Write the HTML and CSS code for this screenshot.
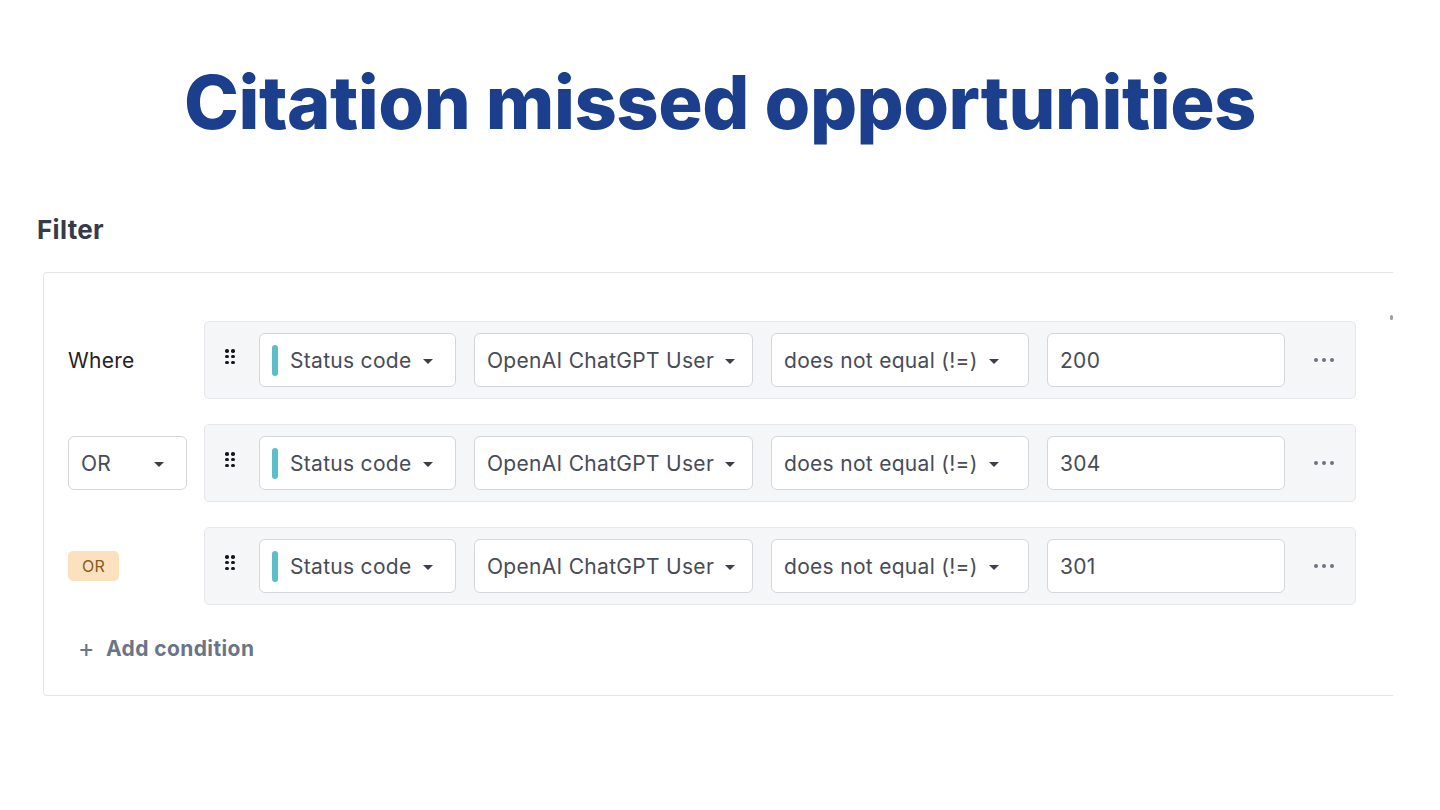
FILE: index.html
```html
<!DOCTYPE html>
<html lang="en">
<head>
<meta charset="utf-8">
<title>Citation missed opportunities</title>
<link rel="stylesheet" href="styles.css">
</head>
<body>
<h1 class="title">Citation missed opportunities</h1>
<section class="filter">
  <h2 class="filter-title">Filter</h2>
  <div class="card">
    <span class="edge-mark"></span>
    <div class="row">
      <div class="lead"><span class="where">Where</span></div>
      <div class="group">
        <span class="handle"><i></i><i></i><i></i><i></i><i></i><i></i></span>
        <div class="select sel-field"><span class="bar"></span><span>Status code</span><span class="caret"></span></div>
        <div class="select sel-agent"><span>OpenAI ChatGPT User</span><span class="caret"></span></div>
        <div class="select sel-op"><span>does not equal (!=)</span><span class="caret"></span></div>
        <div class="input">200</div>
        <span class="more"><i></i><i></i><i></i></span>
      </div>
    </div>
    <div class="row">
      <div class="lead"><div class="select sel-or"><span>OR</span><span class="caret"></span></div></div>
      <div class="group">
        <span class="handle"><i></i><i></i><i></i><i></i><i></i><i></i></span>
        <div class="select sel-field"><span class="bar"></span><span>Status code</span><span class="caret"></span></div>
        <div class="select sel-agent"><span>OpenAI ChatGPT User</span><span class="caret"></span></div>
        <div class="select sel-op"><span>does not equal (!=)</span><span class="caret"></span></div>
        <div class="input">304</div>
        <span class="more"><i></i><i></i><i></i></span>
      </div>
    </div>
    <div class="row">
      <div class="lead"><span class="badge">OR</span></div>
      <div class="group">
        <span class="handle"><i></i><i></i><i></i><i></i><i></i><i></i></span>
        <div class="select sel-field"><span class="bar"></span><span>Status code</span><span class="caret"></span></div>
        <div class="select sel-agent"><span>OpenAI ChatGPT User</span><span class="caret"></span></div>
        <div class="select sel-op"><span>does not equal (!=)</span><span class="caret"></span></div>
        <div class="input">301</div>
        <span class="more"><i></i><i></i><i></i></span>
      </div>
    </div>
    <div class="add"><span class="plus">+</span><span>Add condition</span></div>
  </div>
</section>
</body>
</html>
```
FILE: styles.css
```css
* { box-sizing: border-box; }
html, body { margin: 0; padding: 0; background: #fff; }
body {
  font-family: "Inter", "Noto Sans", sans-serif;
  width: 1440px;
  height: 810px;
  overflow: hidden;
}
.title {
  margin: 0;
  padding-top: 62px;
  height: 150px;
  text-align: center;
  font-size: 74px;
  font-weight: 800;
  color: #1b3f8c;
  letter-spacing: -0.5px;
  line-height: 80px;
}
.filter { padding-left: 37px; padding-top: 65px; }
.filter-title {
  margin: 0;
  font-size: 26px;
  font-weight: 700;
  color: #363b47;
  line-height: 30px;
  letter-spacing: 0.3px;
}
.card {
  position: relative;
  margin-top: 27px;
  margin-left: 6px;
  width: 1350px;
  height: 424px;
  border: 1px solid #e4e6ea;
  border-right: none;
  border-radius: 4px 0 0 4px;
  padding: 48px 0 0 24px;
}
.edge-mark {
  position: absolute;
  right: 0;
  top: 42px;
  width: 3px;
  height: 5px;
  border-radius: 2px;
  background: #9aa0aa;
}
.row {
  display: flex;
  align-items: center;
  margin-bottom: 25px;
}
.lead { width: 136px; display: flex; align-items: center; }
.where { font-size: 21px; color: #1f2227; letter-spacing: 0.3px; }
.group {
  width: 1152px;
  height: 78px;
  background: #f5f6f8;
  border: 1px solid #e6e8ec;
  border-radius: 5px;
  display: flex;
  align-items: center;
  padding-left: 20px;
}
.handle {
  width: 9px;
  height: 15px;
  display: grid;
  grid-template-columns: 3.5px 3.5px;
  grid-template-rows: 3.5px 3.5px 3.5px;
  column-gap: 2.5px;
  row-gap: 2.3px;
  margin-right: 25px;
  align-self: flex-start;
  margin-top: 27px;
}
.handle i { display: block; width: 3.5px; height: 3.5px; border-radius: 50%; background: #15171b; }
.select, .input {
  height: 54px;
  background: #fff;
  border: 1px solid #d3d6db;
  border-radius: 6px;
  display: flex;
  align-items: center;
  font-size: 21px;
  letter-spacing: 0.3px;
  color: #474c56;
  margin-right: 18px;
}
.select { padding: 0 0 0 12px; }
.caret {
  width: 0; height: 0;
  border-left: 5px solid transparent;
  border-right: 5px solid transparent;
  border-top: 5px solid #3a3f4a;
  margin-left: 11px;
  margin-top: 2px;
}
.sel-field { width: 197px; }
.sel-agent { width: 279px; }
.sel-op { width: 258px; }
.input { width: 238px; padding-left: 12px; margin-right: 29px; }
.bar {
  width: 6px; height: 31px; border-radius: 3px; background: #5bbec9;
  margin-right: 12px;
}
.more { display: flex; gap: 4px; }
.more i { display: block; width: 4px; height: 4px; border-radius: 50%; background: #6b7381; }
.sel-or { width: 119px; margin-right: 0; padding-right: 22px; justify-content: space-between; }
.badge {
  display: inline-flex;
  align-items: center;
  justify-content: center;
  width: 51px; height: 30px;
  border-radius: 5px;
  background: #fbe1be;
  color: #8b5a24;
  font-size: 16px;
  letter-spacing: 0.3px;
}
.add {
  display: flex;
  align-items: center;
  padding-left: 10px;
  margin-top: 28px;
  color: #6b7586;
  font-size: 21px;
  font-weight: 700;
  letter-spacing: 0.4px;
}
.plus { font-weight: 400; font-size: 25px; margin-right: 11px; }
```
